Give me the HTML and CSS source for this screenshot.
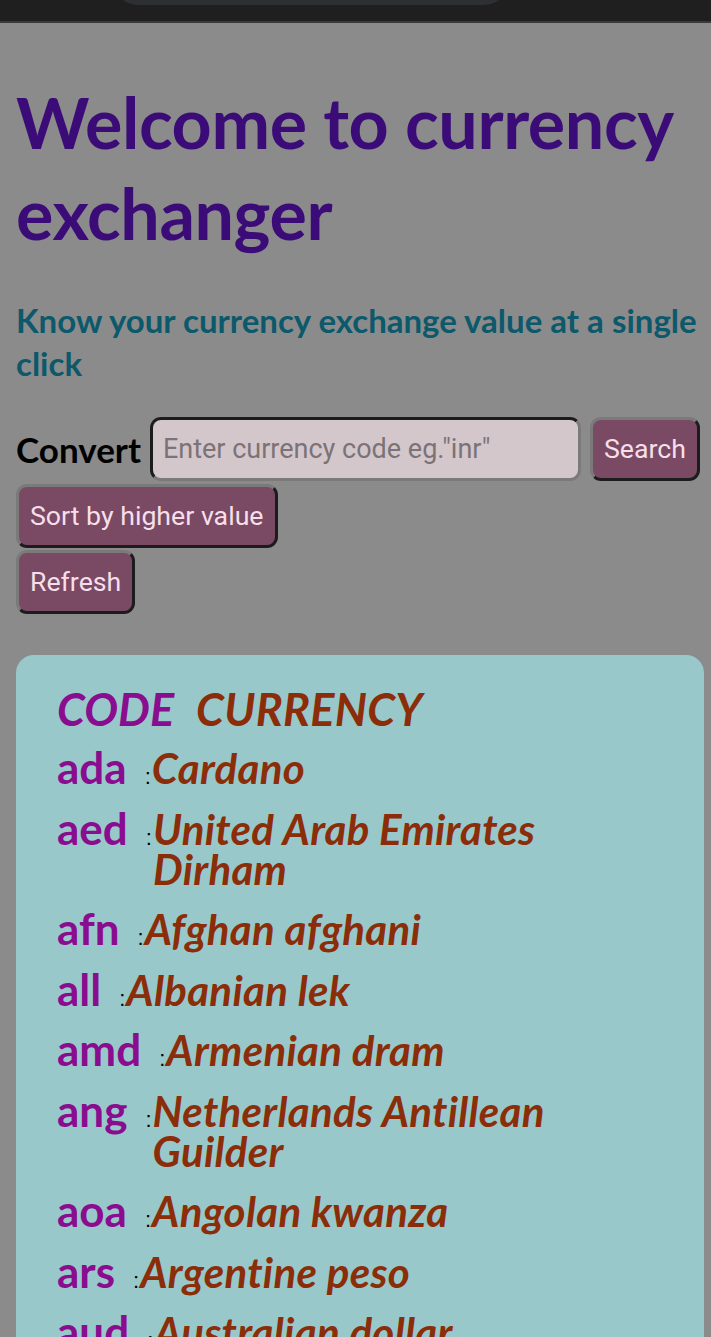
FILE: index.html
```html
<!DOCTYPE html>
<html lang="en">
<head>
<meta charset="utf-8">
<title>Currency exchanger</title>
<link rel="stylesheet" href="styles.css">
</head>
<body>
<div class="topbar"><div class="pill"></div></div>
<main class="page">
  <h1 class="title">Welcome to currency exchanger</h1>
  <h3 class="subtitle">Know your currency exchange value at a single click</h3>
  <div class="convert-row">
    <label class="convert-label" for="code">Convert</label>
    <input id="code" class="code-input" type="text" placeholder="Enter currency code eg.&quot;inr&quot;">
    <button class="btn btn-search">Search</button>
  </div>
  <div class="actions">
    <button class="btn btn-sort">Sort by higher value</button>
    <button class="btn btn-refresh">Refresh</button>
  </div>
  <section class="card">
    <div class="row head">
      <span class="code italic">CODE</span>
      <span class="name">CURRENCY</span>
    </div>
    <div class="row"><span class="code">ada</span><span class="colon">:</span><span class="name">Cardano</span></div>
    <div class="row"><span class="code">aed</span><span class="colon">:</span><span class="name">United Arab Emirates Dirham</span></div>
    <div class="row"><span class="code">afn</span><span class="colon">:</span><span class="name">Afghan afghani</span></div>
    <div class="row"><span class="code">all</span><span class="colon">:</span><span class="name">Albanian lek</span></div>
    <div class="row"><span class="code">amd</span><span class="colon">:</span><span class="name">Armenian dram</span></div>
    <div class="row"><span class="code">ang</span><span class="colon">:</span><span class="name">Netherlands Antillean Guilder</span></div>
    <div class="row"><span class="code">aoa</span><span class="colon">:</span><span class="name">Angolan kwanza</span></div>
    <div class="row"><span class="code">ars</span><span class="colon">:</span><span class="name">Argentine peso</span></div>
    <div class="row"><span class="code">aud</span><span class="colon">:</span><span class="name">Australian dollar</span></div>
    <div class="row"><span class="code">awg</span><span class="colon">:</span><span class="name">Aruban florin</span></div>
  </section>
</main>
</body>
</html>
```

FILE: styles.css
```css
* { box-sizing: border-box; }
html, body { margin: 0; padding: 0; }
body {
  background: #8b8b8b;
  font-family: Lato, "Noto Sans", sans-serif;
  overflow: hidden;
  height: 1337px;
}
.topbar {
  height: 23px;
  background: #1f1f1f;
  border-bottom: 2px solid #3a3a3a;
  position: relative;
}
.pill {
  position: absolute;
  left: 113px;
  width: 396px;
  top: -20px;
  height: 25px;
  background: #2d2f33;
  border-radius: 0 0 40px 40px;
}
.page {
  padding: 0 7px 0 16px;
}
.title {
  margin: 54px 0 0;
  color: #3b0c78;
  font-size: 70px;
  line-height: 91px;
  font-weight: 700;
  letter-spacing: -0.4px;
}
.subtitle {
  margin: 40px 0 0;
  color: #0b596b;
  font-size: 33px;
  line-height: 43px;
  font-weight: 700;
}
.convert-row {
  display: flex;
  align-items: center;
  gap: 9px;
  margin-top: 32px;
}
.convert-label {
  font-size: 35px;
  font-weight: 700;
  color: #000;
}
.code-input {
  width: 431px;
  height: 64px;
  border: 3px solid;
  border-color: #1c1c1c #7a7a7a #7a7a7a #1c1c1c;
  border-radius: 11px;
  background: #d4c7cb;
  font-family: Roboto, sans-serif;
  font-size: 27px;
  padding: 0 10px;
  color: #333;
  outline: none;
}
.code-input::placeholder { color: #7b7377; }
.btn {
  height: 64px;
  border: 3px solid;
  border-color: #7a7a7a #1c1c1c #1c1c1c #7a7a7a;
  border-radius: 11px;
  background: #7a4a64;
  color: #f6dfe9;
  font-family: Roboto, sans-serif;
  font-size: 26.7px;
  padding: 0 11px;
}
.actions {
  display: flex;
  flex-direction: column;
  align-items: flex-start;
  gap: 2px;
  margin-top: 3px;
}
.card {
  margin-top: 41px;
  background: #99c8cb;
  border-radius: 18px;
  padding: 34px 70px 40px 41px;
}
.row {
  display: flex;
  align-items: baseline;
  font-size: 42px;
  line-height: 40px;
  margin-top: 19.5px;
}
.row.head { margin-top: 0; font-size: 45px; }
.head + .row { margin-top: 18px; }
.code {
  color: #8a0c8f;
  font-weight: 700;
  margin-right: 18px;
  font-size: 44px;
}
.head .code { font-size: 45px; margin-right: 22px; }
.italic { font-style: italic; }
.colon {
  font-size: 22px;
  line-height: 20px;
  color: #000;
  font-family: "Liberation Sans", sans-serif;
  margin-right: 1px;
}
.name {
  color: #8a2d08;
  font-weight: 700;
  font-style: italic;
  letter-spacing: 0.3px;
}
```
